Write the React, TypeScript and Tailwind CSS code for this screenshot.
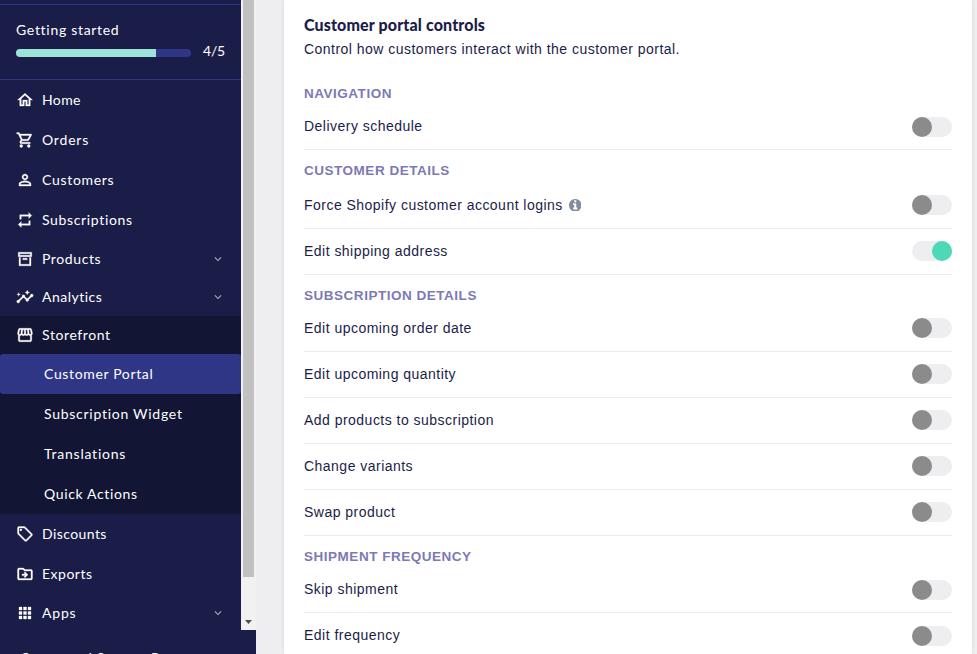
import React from "react";
import {
  MdOutlineHome,
  MdOutlineShoppingCart,
  MdPersonOutline,
  MdRepeat,
  MdInsights,
  MdOutlineStorefront,
  MdOutlineLocalOffer,
  MdOutlineDriveFileMove,
  MdApps,
  MdExpandMore,
} from "react-icons/md";

const ArchiveIcon = ({ className }: { className?: string }) => (
  <svg viewBox="0 0 24 24" fill="currentColor" stroke="currentColor" className={className}>
    <path d="M20 21H4V10H6V19H18V10H20V21M3 3H21V9H3V3M9.5 11H14.5C14.78 11 15 11.22 15 11.5V13H9V11.5C9 11.22 9.22 11 9.5 11M5 5V7H19V5H5Z" />
  </svg>
);

const InfoIcon = ({ className }: { className?: string }) => (
  <svg viewBox="0 128 1536 1536" fill="currentColor" className={className}>
    <path d="M1024 1376v-160q0-14-9-23t-23-9h-96v-512q0-14-9-23t-23-9h-320q-14 0-23 9t-9 23v160q0 14 9 23t23 9h96v320h-96q-14 0-23 9t-9 23v160q0 14 9 23t23 9h448q14 0 23-9t9-23zm-128-896v-160q0-14-9-23t-23-9h-192q-14 0-23 9t-9 23v160q0 14 9 23t23 9h192q14 0 23-9t9-23zm640 416q0 209-103 385.5t-279.5 279.5-385.5 103-385.5-103-279.5-279.5-103-385.5 103-385.5 279.5-279.5 385.5-103 385.5 103 279.5 279.5 103 385.5z" />
  </svg>
);

type IconType = React.ComponentType<{ className?: string }>;

function NavItem({
  icon: Icon,
  label,
  height = "h-10",
  tracking = "tracking-[0.6px]",
  arrow,
  dark,
}: {
  icon: IconType;
  label: string;
  height?: string;
  tracking?: string;
  arrow?: boolean;
  dark?: boolean;
}) {
  return (
    <div className={`flex shrink-0 items-center pl-4 pr-4 ${height} ${dark ? "bg-[#121533]" : ""}`}>
      <Icon className="size-[18px] shrink-0 [&_path:not([fill=none])]:stroke-[0.4]" />
      <span className={`ml-2 grow ${tracking}`}>{label}</span>
      {arrow && <MdExpandMore className="size-3.5 text-[#a6a7b8]" />}
    </div>
  );
}

function SubItem({ label, tracking, active }: { label: string; tracking: string; active?: boolean }) {
  return (
    <div className={`flex h-10 shrink-0 items-center pl-11 ${tracking} ${active ? "rounded-[3px] bg-[#2f3685]" : ""}`}>
      {label}
    </div>
  );
}

function Toggle({ on, low }: { on?: boolean; low?: boolean }) {
  return (
    <span className={`flex h-5 w-10 rounded-full bg-[#eeeef0] ${on ? "justify-end" : ""} ${low ? "mt-0.5" : ""}`}>
      <span className={`size-5 rounded-full ${on ? "bg-[#4dd8b8]" : "bg-[#8b8b8b]"}`} />
    </span>
  );
}

function Heading({ children }: { children: string }) {
  return (
    <h3 className="flex h-[31px] shrink-0 items-end text-[13.5px] font-bold leading-5 tracking-[0.52px] text-[#7d79b4]">
      {children}
    </h3>
  );
}

function Row({
  label,
  on,
  info,
  low,
  height = "h-[46px] pb-px",
}: {
  label: string;
  on?: boolean;
  info?: boolean;
  low?: boolean;
  height?: string;
}) {
  return (
    <div className={`flex shrink-0 items-center justify-between border-b border-[#ebebed] ${height}`}>
      <span className="flex items-center">
        {label}
        {info && <InfoIcon className="ml-1.5 mt-px size-[12.5px] text-[#7f8c99]" />}
      </span>
      <Toggle on={on} low={low} />
    </div>
  );
}

export default function App() {
  return (
    <div className="flex h-[654px] w-[977px] overflow-hidden bg-[#eeeef1] font-['Liberation_Sans',Arial,sans-serif] text-sm text-[#1b1d49]">
      <aside className="flex w-64 shrink-0 flex-col overflow-hidden bg-[#1b1d49] font-[Lato,sans-serif] text-[14px] leading-5 text-white">
        <div className="flex h-[630px] shrink-0">
          <div className="flex w-[241px] flex-col">
            <div className="mt-1 h-[76px] shrink-0 border-y border-[#2f3685] px-4 pt-[15px]">
              <div className="tracking-[0.7px]">Getting started</div>
              <div className="mt-px flex items-center">
                <div className="mt-[3px] h-2 w-[175px] shrink-0 overflow-hidden rounded-full bg-[#2f3685]">
                  <div className="h-full w-4/5 bg-[#9be3d8]" />
                </div>
                <span className="ml-3 tracking-[-0.2px]">4/5</span>
              </div>
            </div>
            <NavItem icon={MdOutlineHome} label="Home" tracking="tracking-[0.4px]" />
            <NavItem icon={MdOutlineShoppingCart} label="Orders" tracking="tracking-[0.8px]" />
            <NavItem icon={MdPersonOutline} label="Customers" tracking="tracking-[0.7px]" />
            <NavItem icon={MdRepeat} label="Subscriptions" tracking="tracking-[0.65px]" />
            <NavItem icon={ArchiveIcon} label="Products" height="h-[38px]" arrow />
            <NavItem icon={MdInsights} label="Analytics" height="h-[38px]" tracking="tracking-[0.5px]" arrow />
            <NavItem icon={MdOutlineStorefront} label="Storefront" height="h-[38px]" dark />
            <div className="flex shrink-0 flex-col bg-[#121533]">
              <SubItem label="Customer Portal" tracking="tracking-[0.65px]" active />
              <SubItem label="Subscription Widget" tracking="tracking-[0.73px]" />
              <SubItem label="Translations" tracking="tracking-[0.77px]" />
              <SubItem label="Quick Actions" tracking="tracking-[0.65px]" />
            </div>
            <NavItem icon={MdOutlineLocalOffer} label="Discounts" tracking="tracking-[0.42px]" />
            <NavItem icon={MdOutlineDriveFileMove} label="Exports" tracking="tracking-[0.5px]" />
            <NavItem icon={MdApps} label="Apps" height="h-[38px]" tracking="tracking-[0.8px]" arrow />
          </div>
          <div className="flex w-[15px] flex-col items-center justify-between bg-[#f1f1f1] pb-[6px]">
            <div className="h-[577px] w-[11px] bg-[#c1c1c1]" />
            <svg width="7" height="4" viewBox="0 0 7 4" className="shrink-0">
              <path d="M0 0h7L3.5 4z" fill="#505050" />
            </svg>
          </div>
        </div>
        <div className="shrink-0 whitespace-nowrap pl-5 pt-[18px] tracking-[0.6px]">Connected Smartrr Rep</div>
      </aside>

      <main className="ml-7 flex w-[688px] shrink-0 flex-col bg-white px-5 tracking-[0.475px] shadow-[0_0_3px_rgba(0,0,0,0.12)]">
        <h2 className="mt-[15px] h-5 shrink-0 font-[Lato,sans-serif] text-[16px] font-black leading-5 tracking-[0.13px]">
          Customer portal controls
        </h2>
        <p className="mt-1 h-5 shrink-0 leading-5">Control how customers interact with the customer portal.</p>
        <div className="h-[14px] shrink-0" />
        <Heading>NAVIGATION</Heading>
        <Row label="Delivery schedule" low />
        <Heading>CUSTOMER DETAILS</Heading>
        <Row label="Force Shopify customer account logins" info height="h-12" />
        <Row label="Edit shipping address" on />
        <Heading>SUBSCRIPTION DETAILS</Heading>
        <Row label="Edit upcoming order date" />
        <Row label="Edit upcoming quantity" />
        <Row label="Add products to subscription" />
        <Row label="Change variants" />
        <Row label="Swap product" />
        <Heading>SHIPMENT FREQUENCY</Heading>
        <Row label="Skip shipment" low />
        <Row label="Edit frequency" low />
      </main>
    </div>
  );
}
